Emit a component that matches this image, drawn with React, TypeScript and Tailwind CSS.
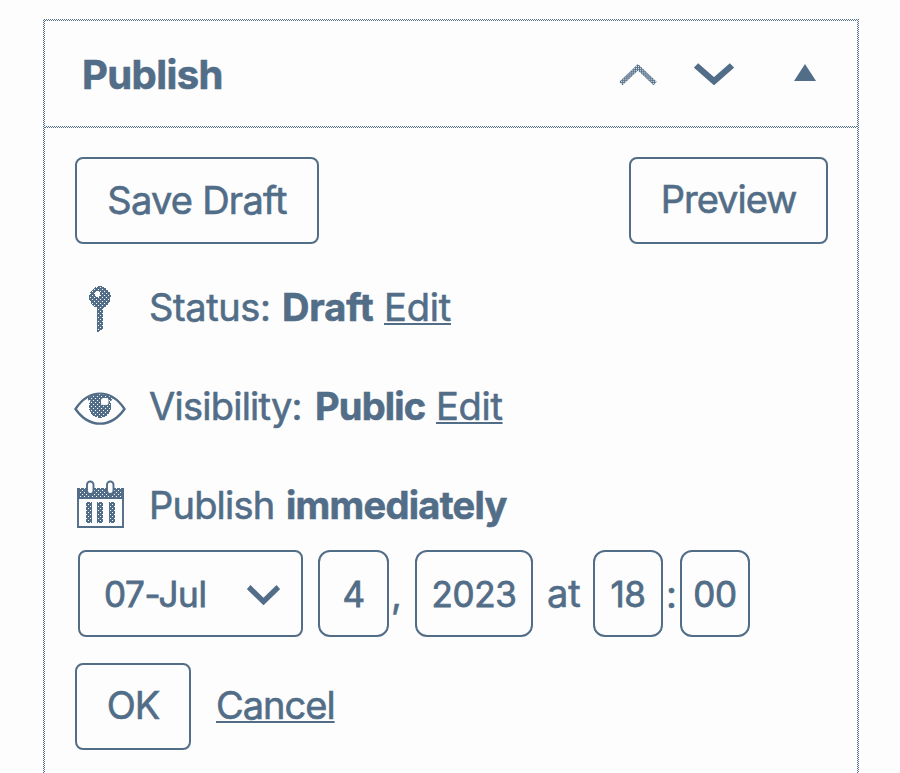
import type { ReactNode } from "react";

const INK = "#526d87";
const PAPER = "#fdfdfd";

function Chevron({ up = false, className }: { up?: boolean; className: string }) {
  return (
    <svg viewBox="0 0 40 23" className={className} fill="none" preserveAspectRatio="none">
      {up ? (
        <path d="M2 20.5 20 3.5 38 20.5" stroke="url(#mesh)" strokeWidth="5" />
      ) : (
        <path d="M2 2.5 20 19 38 2.5" stroke={INK} strokeWidth="6.4" />
      )}
    </svg>
  );
}

function KeyIcon() {
  return (
    <svg width="52" height="60" viewBox="0 -1 52 60" className="shrink-0" shapeRendering="crispEdges">
      <path
        fillRule="evenodd"
        fill="url(#speckle)"
        d="M25 8a11.3 11.3 0 0 1 3 22v20.500l-4.500 3.500h-1.500V30A11.3 11.3 0 0 1 25 8Zm-2.500 5.200a2.900 2.900 0 1 0 .01 5.800a2.900 2.900 0 0 0 0-5.800Z"
      />
    </svg>
  );
}

function EyeIcon() {
  return (
    <svg width="52" height="60" viewBox="1 -1 52 60" className="shrink-0 overflow-visible" fill="none">
      <path d="M1.500 32C15 11.500 37 11.500 50.500 32C37 51.500 15 51.500 1.500 32Z" stroke={INK} strokeWidth="2.400" />
      <path d="M14 22.500Q26 16 38 22.500" stroke="url(#speckle)" strokeWidth="4" />
      <circle cx="26" cy="29.500" r="11.200" fill="url(#speckle)" shapeRendering="crispEdges" />
      <rect x="27" y="21" width="7.500" height="7" rx="2.500" fill={PAPER} />
    </svg>
  );
}

function CalendarIcon() {
  return (
    <svg width="52" height="60" viewBox="0 0 52 60" className="shrink-0" fill="none">
      <path d="M2 13h47v11H2z" fill="url(#speckle)" shapeRendering="crispEdges" />
      <path d="M3 14V52H48V14" stroke={INK} strokeWidth="1.900" />
      <path d="M3 23.500H48" stroke={INK} strokeWidth="1" />
      {[15, 35].map((x) => (
        <rect key={x} x={x - 3} y="6.500" width="6.500" height="12.500" rx="3.200" fill={PAPER} stroke={INK} strokeWidth="1.900" />
      ))}
      {[11, 22, 34].map((x) => (
        <path key={x} d={`M${x} 27h5.500v21h-5.500z`} fill="url(#speckle)" shapeRendering="crispEdges" />
      ))}
    </svg>
  );
}

const mesh =
  "bg-[repeating-conic-gradient(#526d87_0%_25%,#fdfdfd_0%_50%)] bg-[length:2px_2px]";

function Row({ icon, className, children }: { icon: ReactNode; className: string; children: ReactNode }) {
  return (
    <div className={`flex items-center ${className}`}>
      {icon}
      <div className="ml-[22px] flex whitespace-nowrap">{children}</div>
    </div>
  );
}

function Link({ className = "", children }: { className?: string; children: ReactNode }) {
  return (
    <a className={`underline decoration-[2px] underline-offset-[2px] [text-decoration-skip-ink:none] ${className}`}>
      {children}
    </a>
  );
}

const field =
  "flex h-[87px] shrink-0 items-center border-2 border-[#526d87] pt-[2px] text-[35px] leading-none tracking-[-0.4px] [-webkit-text-stroke:0.8px_#526d87]";
const button =
  "flex h-[87px] shrink-0 items-center justify-center rounded-[8px] border-2 border-[#526d87]";

export default function App() {
  return (
    <div className="h-[773px] w-[900px] overflow-hidden bg-[#fdfdfd] pl-[43px] pt-[19px] font-['Inter',sans-serif] text-[38px] leading-[46px] text-[#526d87] [-webkit-text-stroke:0.6px_#526d87]">
      <svg width="0" height="0" className="absolute">
        <defs>
          <pattern id="mesh" width="2" height="2" patternUnits="userSpaceOnUse">
            <rect width="2" height="2" fill={INK} />
            <rect width="1" height="1" fill={PAPER} />
          </pattern>
          <pattern id="speckle" width="4" height="4" patternUnits="userSpaceOnUse">
            <rect width="4" height="4" fill={INK} />
            <rect x="1" y="1" width="1" height="1" fill={PAPER} />
            <rect x="3" y="3" width="1" height="1" fill={PAPER} />
          </pattern>
        </defs>
      </svg>
      <div className={`h-[800px] w-[816px] p-[2px] ${mesh}`}>
        <div className="h-full bg-[#fdfdfd]">
          <header className="flex h-[105px] items-center pl-[37px] pr-[40px]">
            <h2 className="mt-[3px] text-[40px] font-bold tracking-[-0.6px]">Publish</h2>
            <div className="ml-auto flex items-center">
              <Chevron up className="mr-[37px] mt-[3px] h-[22px] w-[38px]" />
              <Chevron className="mr-[60px] h-[22px] w-[40px]" />
              <svg width="22" height="17" viewBox="0 0 22 17" className="mb-[2px] mr-[1px]">
                <path d="M11 0 22 17H0Z" fill={INK} />
              </svg>
            </div>
          </header>
          <div className={`h-[2px] ${mesh}`} />
          <div className="pl-[30px] pr-[29px] pt-[29px]">
            <div className="flex justify-between">
              <button className={`${button} w-[244px] pb-px tracking-[-0.75px]`}>Save Draft</button>
              <button className={`${button} w-[199px] pb-[3px] tracking-[-1px]`}>Preview</button>
            </div>
            <Row icon={<KeyIcon />} className="mt-[14px] h-[98px]">
              <span className="w-[133px] tracking-[-0.4px]">Status:</span>
              <b className="w-[102px] tracking-[-0.1px]">Draft</b>
              <Link className="tracking-[-0.2px]">Edit</Link>
            </Row>
            <Row icon={<EyeIcon />} className="h-[99px]">
              <span className="w-[166px] tracking-[-0.75px]">Visibility:</span>
              <b className="w-[121px] tracking-[-0.8px]">Public</b>
              <Link className="tracking-[-0.3px]">Edit</Link>
            </Row>
            <Row icon={<CalendarIcon />} className="h-[95px] pt-[5px]">
              <span className="w-[137px] tracking-[-0.8px]">Publish</span>
              <b className="tracking-[-0.7px]">immediately</b>
            </Row>
            <div className="flex items-center pl-[3px]">
              <div className={`${field} w-[225px] justify-between rounded-[8px] pl-[24px] pr-[21px]`}>
                <span>07-Jul</span>
                <Chevron className="mt-[1px] h-[20px] w-[33px]" />
              </div>
              <div className={`${field} ml-[15px] w-[71px] justify-center rounded-[12px]`}>4</div>
              <span className="w-[26px] pl-[2px]">,</span>
              <div className={`${field} w-[118px] justify-center rounded-[12px]`}>2023</div>
              <span className="w-[60px] pb-[2px] pl-[14px]">at</span>
              <div className={`${field} w-[70px] justify-center rounded-[12px]`}>18</div>
              <span className="w-[17px] text-center">:</span>
              <div className={`${field} w-[70px] justify-center rounded-[12px]`}>00</div>
            </div>
            <div className="mt-[26px] flex items-center">
              <button className={`${button} mr-[25px] w-[116px] pb-[4px] tracking-[-1px]`}>OK</button>
              <Link className="pb-[4px] tracking-[-1px]">Cancel</Link>
            </div>
          </div>
        </div>
      </div>
    </div>
  );
}
